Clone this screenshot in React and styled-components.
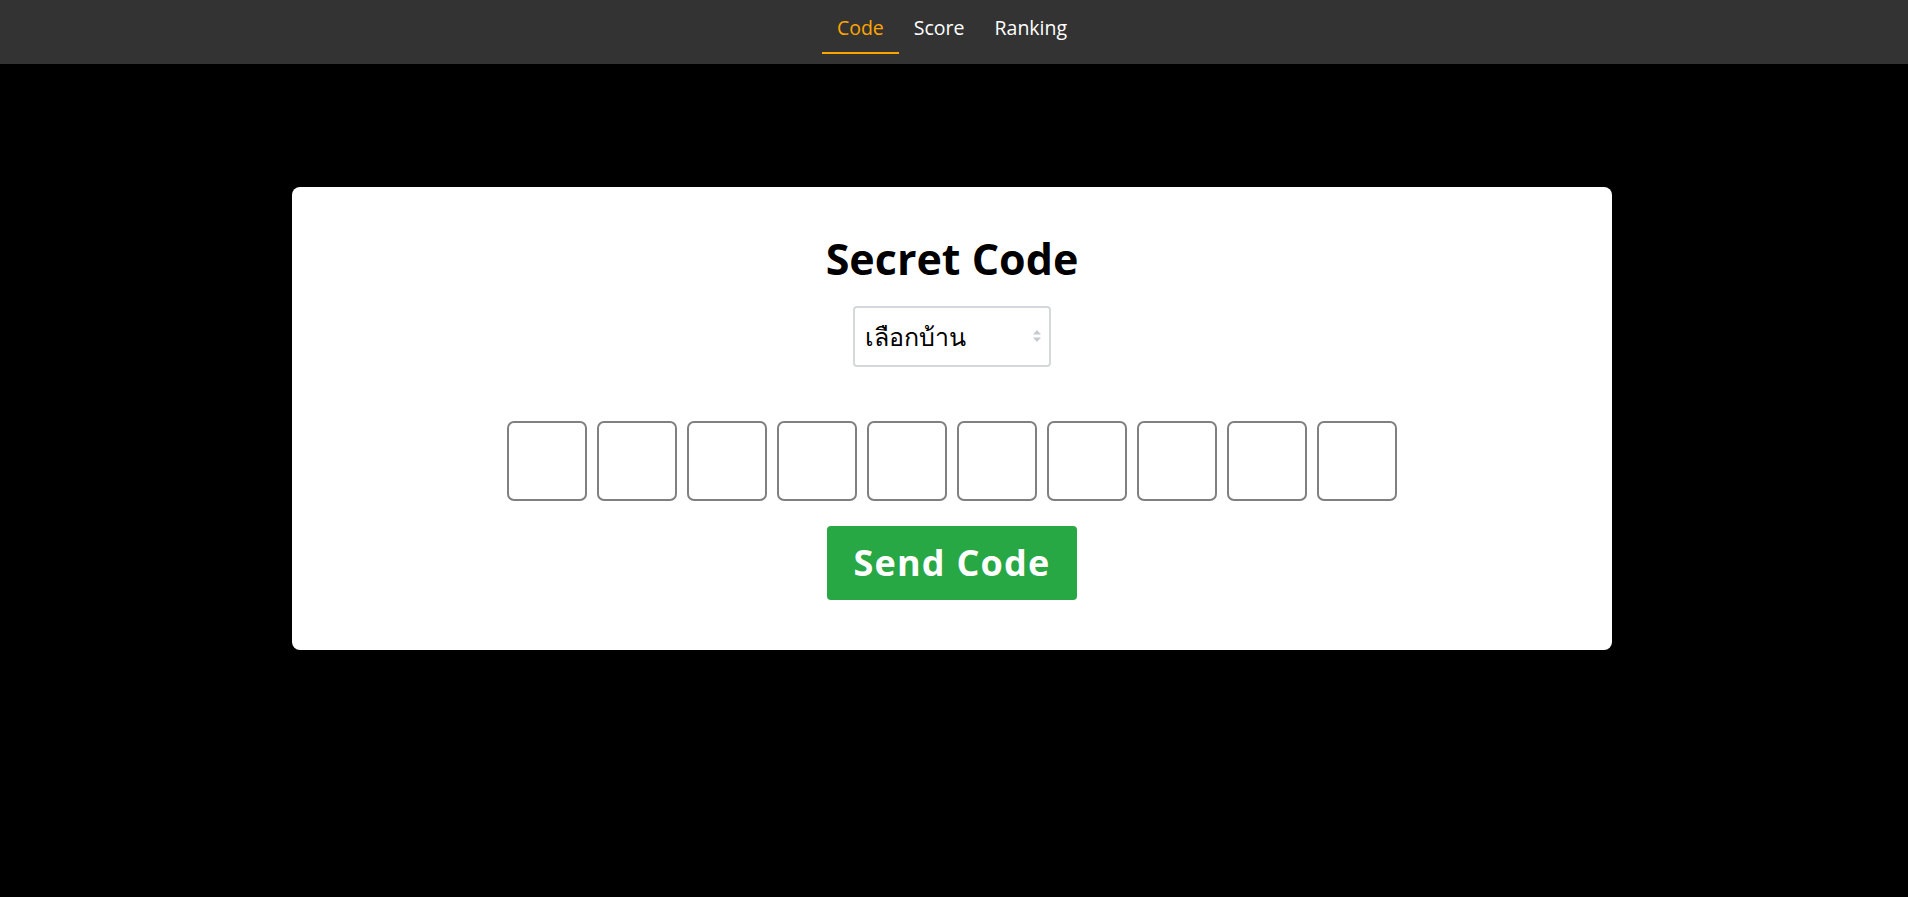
import React from "react";
import styled, { createGlobalStyle } from "styled-components";

const Global = createGlobalStyle`
  html, body { margin: 0; padding: 0; background: #000; }
  body { font-family: "Open Sans", "Noto Sans", sans-serif; }
  * { box-sizing: border-box; }
`;

const Page = styled.div`
  min-height: 897px;
  background: #000;
`;

const NavBar = styled.nav`
  height: 64px;
  background: #333333;
  display: flex;
  justify-content: center;
  padding-right: 4px;
`;

const NavList = styled.div`
  display: flex;
  align-items: stretch;
`;

const NavLink = styled.a`
  display: flex;
  align-items: center;
  padding: 8px 15px 5px;
  margin-bottom: 10px;
  font-size: 19.5px;
  font-weight: 500;
  color: ${(p) => (p.$active ? "#ffa500" : "#ffffff")};
  text-decoration: none;
  cursor: pointer;
  border-bottom: 2px solid ${(p) => (p.$active ? "#ffa500" : "transparent")};
`;

const Main = styled.main`
  display: flex;
  justify-content: center;
  padding: 123px 4px 0 0;
`;

const Card = styled.section`
  width: 1320px;
  background: #fff;
  border-radius: 8px;
  padding: 46px 0 50px;
  display: flex;
  flex-direction: column;
  align-items: center;
`;

const Title = styled.h1`
  margin: 0;
  font-size: 43px;
  line-height: 1.2;
  font-weight: 700;
  color: #000;
`;

const SelectWrap = styled.div`
  position: relative;
  margin-top: 21px;
  width: 198px;
  height: 61px;
`;

const Select = styled.select`
  appearance: none;
  -webkit-appearance: none;
  width: 100%;
  height: 100%;
  border: 2px solid #d4d7dc;
  border-radius: 4px;
  background: #fff;
  padding: 0 30px 0 10px;
  font-family: "Noto Sans", "DejaVu Sans", sans-serif;
  font-size: 25px;
  color: #000;
  outline: none;
`;

const Arrow = styled.svg`
  position: absolute;
  right: 9px;
  top: 50%;
  transform: translateY(-50%);
  pointer-events: none;
`;

const Boxes = styled.div`
  display: flex;
  gap: 10px;
  margin-top: 54px;
`;

const Box = styled.input`
  width: 80px;
  height: 80px;
  border: 2px solid #808080;
  border-radius: 7px;
  background: #fff;
  text-align: center;
  font-size: 36px;
  font-family: "Open Sans", sans-serif;
  outline: none;
`;

const SendButton = styled.button`
  margin-top: 25px;
  width: 250px;
  height: 74px;
  border: none;
  border-radius: 4px;
  background: #28a745;
  color: #fff;
  font-family: "Open Sans", sans-serif;
  font-weight: 700;
  font-size: 36px;
  letter-spacing: 1.2px;
  cursor: pointer;
`;

export default function App() {
  return (
    <Page>
      <Global />
      <NavBar>
        <NavList>
          <NavLink $active>Code</NavLink>
          <NavLink>Score</NavLink>
          <NavLink>Ranking</NavLink>
        </NavList>
      </NavBar>
      <Main>
        <Card>
          <Title>Secret Code</Title>
          <SelectWrap>
            <Select defaultValue="">
              <option value="">เลือกบ้าน</option>
            </Select>
            <Arrow width="10" height="14" viewBox="0 0 10 14">
              <path d="M5 1 L9 5.5 H1 Z" fill="#c6cace" />
              <path d="M5 13 L9 8.5 H1 Z" fill="#c6cace" />
            </Arrow>
          </SelectWrap>
          <Boxes>
            {Array.from({ length: 10 }).map((_, i) => (
              <Box key={i} maxLength={1} />
            ))}
          </Boxes>
          <SendButton>Send Code</SendButton>
        </Card>
      </Main>
    </Page>
  );
}
